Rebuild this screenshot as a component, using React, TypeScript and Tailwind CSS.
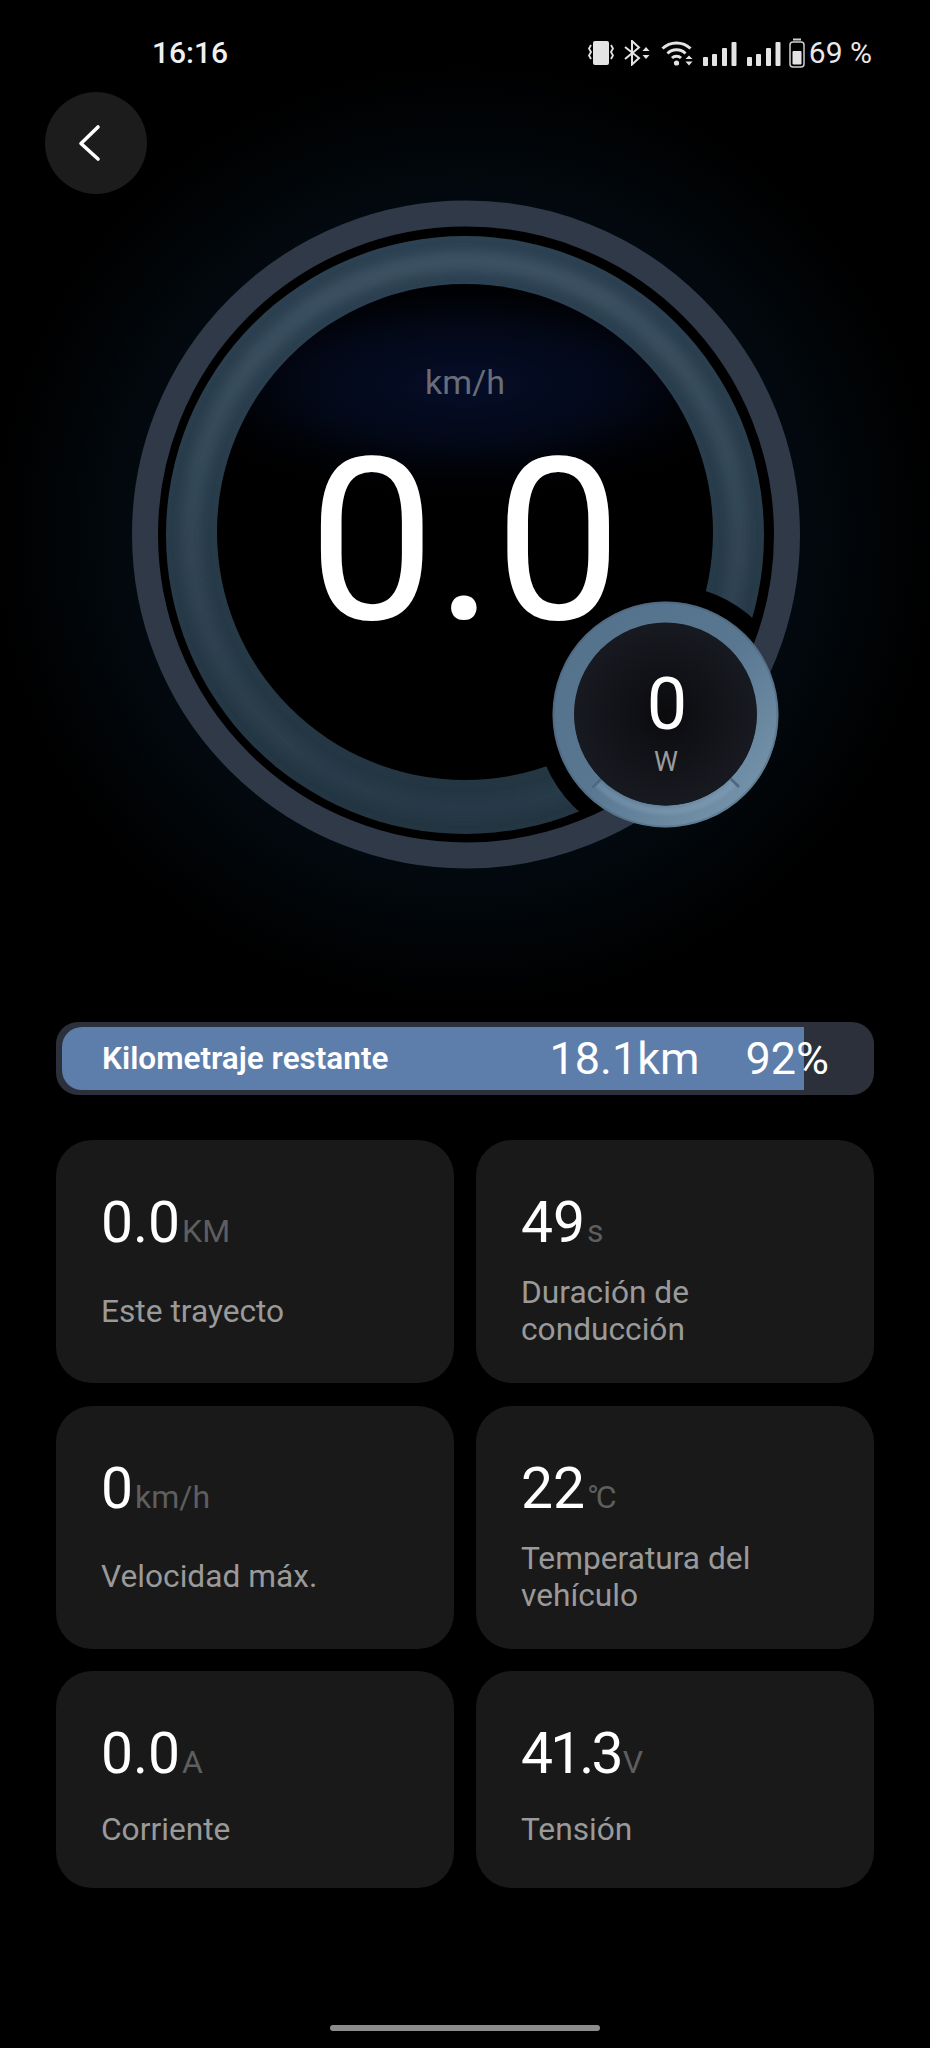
const stats = [
  { value: "0.0", unit: "KM", label: "Este trayecto" },
  { value: "49", unit: "s", label: "Duración de conducción" },
  { value: "0", unit: "km/h", label: "Velocidad máx." },
  { value: "22", unit: "°C", label: "Temperatura del vehículo" },
  { value: "0.0", unit: "A", label: "Corriente" },
  { value: "41.3", unit: "V", label: "Tensión", tight: true },
];

function SignalBars() {
  return (
    <svg width="34" height="24" viewBox="0 0 34 24" fill="#e4e4e4">
      <rect x="0" y="15" width="5" height="9" rx="1" />
      <rect x="9" y="12" width="5" height="12" rx="1" />
      <rect x="19" y="6" width="5" height="18" rx="1" />
      <rect x="28.5" y="0" width="5" height="24" rx="1" />
    </svg>
  );
}

function StatusIcons() {
  return (
    <div className="flex items-center">
      {/* vibrate */}
      <svg width="26" height="24" viewBox="0 0 26 24" fill="none" className="mr-[10px]">
        <rect x="5" y="0" width="16" height="24" rx="2" fill="#e4e4e4" />
        <path d="M3 4 L1 7.5 L3 11 L1 14.5 L3 18" stroke="#e4e4e4" strokeWidth="1.8" />
        <path d="M23 4 L25 7.5 L23 11 L25 14.5 L23 18" stroke="#e4e4e4" strokeWidth="1.8" />
      </svg>
      {/* bluetooth with activity arrows */}
      <svg width="26" height="26" viewBox="0 0 26 26" fill="none" className="mr-[11px]">
        <path d="M1 7 L15 18 L8 24.5 V1 L15 7.5 L1 19" stroke="#e4e4e4" strokeWidth="2" />
        <path d="M18.5 11 L22 7 L25.5 11 Z M18.5 15 L22 19 L25.5 15 Z" fill="#e4e4e4" />
      </svg>
      {/* wifi */}
      <svg width="32" height="26" viewBox="0 0 32 26" fill="none" className="mr-[10px]">
        <path d="M1.5 8.5 C9 1 22 1 29.5 8.5" stroke="#e4e4e4" strokeWidth="3" />
        <path d="M6.5 13.5 C11.5 8.5 19.5 8.5 24.5 13.5" stroke="#e4e4e4" strokeWidth="3" />
        <path d="M11 18 C13.5 15.5 17.5 15.5 20 18" stroke="#e4e4e4" strokeWidth="3" />
        <circle cx="15.5" cy="23" r="2.6" fill="#e4e4e4" />
        <path d="M24.5 19 L28 15.5 L31.5 19 Z M24.5 21.5 L28 25.5 L31.5 21.5 Z" fill="#e4e4e4" />
      </svg>
      <div className="mr-[10px] mt-[2px]">
        <SignalBars />
      </div>
      <div className="mr-[8px] mt-[2px]">
        <SignalBars />
      </div>
      {/* battery */}
      <svg width="16" height="30" viewBox="0 0 16 30" fill="none" className="mr-[4px]">
        <rect x="4" y="0.5" width="8" height="2" fill="#cfcfcf" />
        <rect x="1" y="4" width="14" height="25" rx="3" stroke="#cfcfcf" strokeWidth="1.5" />
        <rect x="3.5" y="13" width="9" height="13.5" rx="1" fill="#e4e4e4" />
      </svg>
      <span className="text-[30px] leading-none text-[#e8e8e8]">69 %</span>
    </div>
  );
}

function GaugeDrawing() {
  return (
    <svg
      width="930"
      height="828"
      viewBox="0 194 930 828"
      className="absolute left-0 top-0 overflow-visible"
      fill="none"
    >
      <defs>
        <radialGradient id="halo" cx="466" cy="535" r="470" gradientUnits="userSpaceOnUse">
          <stop offset="0.7" stopColor="#0a2236" stopOpacity="0.28" />
          <stop offset="1" stopColor="#0a2236" stopOpacity="0" />
        </radialGradient>
        <radialGradient id="topGlow">
          <stop offset="0" stopColor="#050d28" />
          <stop offset="0.5" stopColor="#030817" />
          <stop offset="1" stopColor="#000000" stopOpacity="0" />
        </radialGradient>
        <linearGradient id="tubeBase" x1="0" y1="236" x2="0" y2="834" gradientUnits="userSpaceOnUse">
          <stop offset="0" stopColor="#2c4152" />
          <stop offset="1" stopColor="#233541" />
        </linearGradient>
        <linearGradient id="tubeLight" x1="0" y1="236" x2="0" y2="834" gradientUnits="userSpaceOnUse">
          <stop offset="0" stopColor="#3c5263" />
          <stop offset="1" stopColor="#263845" />
        </linearGradient>
        <linearGradient id="powerRing" x1="553" y1="602" x2="778" y2="827" gradientUnits="userSpaceOnUse">
          <stop offset="0" stopColor="#55718c" />
          <stop offset="0.5" stopColor="#597791" />
          <stop offset="1" stopColor="#7d9bb1" />
        </linearGradient>
        <radialGradient id="powerDisk" cx="665" cy="714" r="92" gradientUnits="userSpaceOnUse">
          <stop offset="0" stopColor="#0b0b0e" />
          <stop offset="1" stopColor="#181a21" />
        </radialGradient>
        <clipPath id="insideOuter">
          <circle cx="466" cy="535" r="309" />
        </clipPath>
        <clipPath id="insideHole">
          <circle cx="465" cy="532" r="248" />
        </clipPath>
        <filter id="soft" x="-10%" y="-10%" width="120%" height="120%">
          <feGaussianBlur stdDeviation="5" />
        </filter>
        <filter id="softer" x="-10%" y="-30%" width="120%" height="160%">
          <feGaussianBlur stdDeviation="1.5" />
        </filter>
      </defs>

      <circle cx="466" cy="535" r="470" fill="url(#halo)" />
      <circle cx="466" cy="535" r="309" fill="#000000" />

      {/* speed track */}
      <circle cx="465" cy="535" r="299" fill="url(#tubeBase)" />
      <circle cx="465" cy="535" r="274" stroke="url(#tubeLight)" strokeWidth="20" filter="url(#soft)" />
      <circle cx="465" cy="532" r="248" fill="#000000" />
      <ellipse cx="465" cy="385" rx="320" ry="120" fill="url(#topGlow)" clipPath="url(#insideHole)" />
      <circle cx="665.5" cy="714.5" r="130" fill="#000000" clipPath="url(#insideOuter)" />

      {/* outer ring */}
      <circle cx="466" cy="534.5" r="321" stroke="#303948" strokeWidth="26" />

      {/* power dial */}
      <circle cx="665.5" cy="714.5" r="102" stroke="url(#powerRing)" strokeWidth="22" />
      <circle cx="665.5" cy="714.5" r="112" stroke="#3e5468" strokeWidth="2" opacity="0.3" />
      <path d="M597 783 A97 97 0 0 0 734 783" stroke="#8aa8bd" strokeWidth="7" opacity="0.35" filter="url(#softer)" />
      <path d="M600.5 779.5 L592.7 787.3 M731 779 L739 787" stroke="#4d677e" strokeWidth="2.5" />
      <circle cx="665.5" cy="714" r="91.5" fill="url(#powerDisk)" />
    </svg>
  );
}

function Stat({ value, unit, label, tight }: { value: string; unit: string; label: string; tight?: boolean }) {
  return (
    <div className="flex flex-col rounded-[36px] bg-[#191919] pl-[45px] pr-4 pt-[50px] pb-[15px]">
      <div className="flex h-[64px] items-end">
        <span className={`text-[57px] leading-[62px] text-white ${tight ? "tracking-[-0.05em]" : ""}`}>{value}</span>
        <span className={`ml-[2px] pb-[4px] text-[32px] leading-[38px] text-[#5e5e5e] ${unit === "°C" ? "tracking-[-0.1em]" : ""}`}>{unit}</span>
      </div>
      <div className="flex flex-1 items-center">
        <p className="max-w-[280px] text-[31.7px] leading-[37px] text-[#9a9a9a]">{label}</p>
      </div>
    </div>
  );
}

export default function App() {
  return (
    <div className="h-[2048px] w-[930px] overflow-hidden bg-black font-['Roboto',sans-serif]">
      <div className="flex h-[80px] items-center justify-between pl-[152px] pr-[58px] pt-[26px]">
        <span className="text-[30px] font-medium leading-none text-[#f0f0f0]">16:16</span>
        <StatusIcons />
      </div>

      <button className="relative z-10 ml-[45px] mt-[12px] flex h-[102px] w-[102px] items-center justify-center rounded-full bg-[#1c1c1c]">
        <svg width="24" height="38" viewBox="0 0 24 38" fill="none" className="mr-[14px]">
          <path d="M21 3 L4 19.5 L21 35" stroke="#ffffff" strokeWidth="3.6" strokeLinecap="round" strokeLinejoin="round" />
        </svg>
      </button>

      <div className="relative h-[828px] w-[930px]">
        <GaugeDrawing />
        <span className="absolute left-0 top-[168px] w-[930px] text-center text-[34px] leading-[40px] text-[#6a6d77]">km/h</span>
        <span className="absolute left-0 top-[258px] w-[930px] text-center text-[226px] font-[450] leading-[180px] text-white">0.0</span>
        <span className="absolute left-[567px] top-[469px] w-[200px] text-center text-[72px] leading-[84px] text-white">0</span>
        <span className="absolute left-[566px] top-[551px] w-[200px] text-center text-[27px] leading-[34px] text-[#9b9b9b]">W</span>
      </div>

      <div className="relative mx-[56px] flex h-[73px] items-center justify-between overflow-hidden rounded-[22px] bg-[#2b303b] pl-[46px] pr-[45px]">
        <div className="absolute left-[6px] top-[5px] h-[63px] w-[742px] rounded-l-[20px] bg-[#5d7dab]" />
        <span className="relative text-[31.5px] font-semibold text-white">Kilometraje restante</span>
        <div className="relative flex gap-[46px] text-[45px] font-normal text-white">
          <span>18.1km</span>
          <span>92%</span>
        </div>
      </div>

      <div className="mx-[56px] mt-[45px] grid grid-cols-2 grid-rows-[243px_243px_217px] gap-x-[22px] gap-y-[22.5px]">
        {stats.map((s) => (
          <Stat key={s.label} value={s.value} unit={s.unit} label={s.label} tight={s.tight} />
        ))}
      </div>

      <div className="mx-auto mt-[137px] h-[6px] w-[270px] rounded-full bg-[#8c8c8c]" />
    </div>
  );
}
